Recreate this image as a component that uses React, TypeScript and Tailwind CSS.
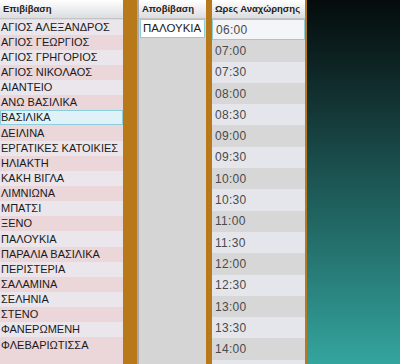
import React from "react";

const stops = [
  "ΑΓΙΟΣ ΑΛΕΞΑΝΔΡΟΣ",
  "ΑΓΙΟΣ ΓΕΩΡΓΙΟΣ",
  "ΑΓΙΟΣ ΓΡΗΓΟΡΙΟΣ",
  "ΑΓΙΟΣ ΝΙΚΟΛΑΟΣ",
  "ΑΙΑΝΤΕΙΟ",
  "ΑΝΩ ΒΑΣΙΛΙΚΑ",
  "ΒΑΣΙΛΙΚΑ",
  "ΔΕΙΛΙΝΑ",
  "ΕΡΓΑΤΙΚΕΣ ΚΑΤΟΙΚΙΕΣ",
  "ΗΛΙΑΚΤΗ",
  "ΚΑΚΗ ΒΙΓΛΑ",
  "ΛΙΜΝΙΩΝΑ",
  "ΜΠΑΤΣΙ",
  "ΞΕΝΟ",
  "ΠΑΛΟΥΚΙΑ",
  "ΠΑΡΑΛΙΑ ΒΑΣΙΛΙΚΑ",
  "ΠΕΡΙΣΤΕΡΙΑ",
  "ΣΑΛΑΜΙΝΑ",
  "ΣΕΛΗΝΙΑ",
  "ΣΤΕΝΟ",
  "ΦΑΝΕΡΩΜΕΝΗ",
  "ΦΛΕΒΑΡΙΩΤΙΣΣΑ",
];

const times = [
  "06:00", "07:00", "07:30", "08:00", "08:30", "09:00", "09:30", "10:00",
  "10:30", "11:00", "11:30", "12:00", "12:30", "13:00", "13:30", "14:00",
];

function Header({ label }: { label: string }) {
  return (
    <div className="h-[19px] shrink-0 flex items-center px-[3px] text-[9.5px] font-bold text-[#222] whitespace-nowrap overflow-hidden bg-gradient-to-b from-white to-[#dcdde0] border-b border-[#c4c4c4]">
      {label}
    </div>
  );
}

export default function App() {
  return (
    <div className="w-[400px] h-[364px] overflow-hidden flex font-['Liberation_Sans',Tahoma,sans-serif] bg-gradient-to-b from-[#050c0c] via-[#1c5654] to-[#34a59e]">
      {/* Departure stops */}
      <div className="w-[123px] shrink-0 flex flex-col bg-[#ebd6d9] overflow-hidden">
        <Header label="Επιβίβαση" />
        <div className="flex flex-col pt-[0.5px]">
          {stops.map((s, i) => (
            <div
              key={s}
              className={
                "h-[15.15px] flex items-center pl-[1px] text-[11px] leading-none text-[#1a1a1a] whitespace-nowrap " +
                (i === 6
                  ? "bg-[#dff2f7] outline outline-1 -outline-offset-1 outline-[#8ccfdc]"
                  : i % 2 === 0
                  ? "bg-[#ebe6ec]"
                  : "bg-[#ebd6d9]")
              }
            >
              {s}
            </div>
          ))}
        </div>
      </div>

      <div className="w-[14px] shrink-0 bg-[#b8791b]" />

      {/* Arrival stops */}
      <div className="w-[69px] shrink-0 flex flex-col bg-[#d5d5d5] border-l-2 border-[#a9a9a9]">
        <Header label="Αποβίβαση" />
        <div className="mx-[1px] h-[19px] flex items-center pl-[2px] bg-white border border-[#8ccfdc] text-[11.5px] text-[#222] whitespace-nowrap overflow-hidden">
          ΠΑΛΟΥΚΙΑ
        </div>
      </div>

      <div className="w-[6px] shrink-0 bg-[#b8791b]" />

      {/* Departure times */}
      <div className="w-[93px] shrink-0 flex flex-col bg-[#e4e6ec]">
        <Header label="Ωρες Αναχώρησης" />
        {times.map((t, i) => (
          <div
            key={t}
            className={
              "h-[21.3px] shrink-0 flex items-center pl-[3px] text-[12px] tracking-[0.3px] text-[#4a4a4a] " +
              (i === 0
                ? "bg-[#f3f5f8] border border-[#8ccfdc]"
                : i % 2 === 1
                ? "bg-[#d7d7d7]"
                : "bg-[#e4e6ec]")
            }
          >
            {t}
          </div>
        ))}
      </div>

      <div className="w-[2px] shrink-0 bg-[#b8791b]" />
      <div className="flex-1" />
    </div>
  );
}
